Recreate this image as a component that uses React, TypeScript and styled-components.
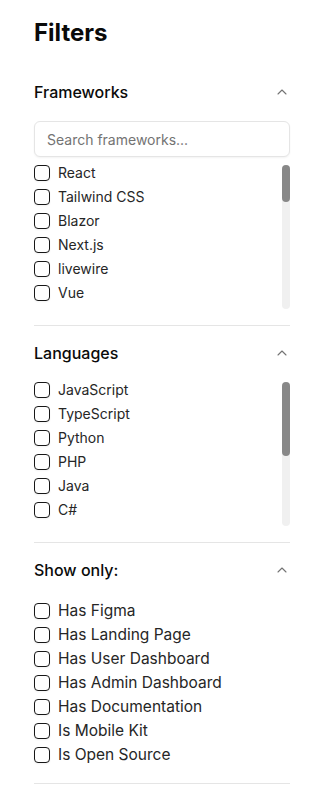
import React from "react";
import styled, { createGlobalStyle } from "styled-components";
import { ChevronUp } from "lucide-react";

const Global = createGlobalStyle`
  html, body { margin: 0; padding: 0; background: #ffffff; }
  body { font-family: Inter, "Noto Sans", sans-serif; color: #0a0a0a; }
  * { box-sizing: border-box; }
`;

const ROW = 16;
const GAP = 8;
const VIEW = 144;

const Sidebar = styled.aside`
  width: 319px;
  padding: 17px 29px 0 34px;
`;

const Title = styled.h2`
  margin: 0 0 16px;
  font-size: 24px;
  line-height: 32px;
  font-weight: 700;
  color: #0a0a0a;
`;

const Section = styled.section`
  border-bottom: 1px solid #e5e5e5;
`;

const Trigger = styled.button`
  display: flex;
  width: 100%;
  align-items: center;
  justify-content: space-between;
  padding: 17px 0 15px;
  border: 0;
  background: none;
  font-family: inherit;
  font-size: 16px;
  line-height: 20px;
  font-weight: 500;
  color: #0a0a0a;
  cursor: pointer;
  text-align: left;
`;

const Content = styled.div<{ $top: number; $bottom: number }>`
  padding: ${(p) => p.$top}px 0 ${(p) => p.$bottom}px;
`;

const Search = styled.input`
  display: block;
  width: 100%;
  height: 36px;
  margin-bottom: 8px;
  padding: 0 12px;
  border: 1px solid #e5e5e5;
  border-radius: 6px;
  box-shadow: 0 1px 2px rgba(0, 0, 0, 0.05);
  font-family: inherit;
  font-size: 14px;
  color: #0a0a0a;
  outline: none;
  &::placeholder { color: #737373; }
`;

const ScrollRoot = styled.div`
  position: relative;
  height: ${VIEW}px;
`;

const Viewport = styled.div`
  height: 100%;
  overflow: hidden;
`;

const Track = styled.div`
  position: absolute;
  top: 0;
  right: 0;
  bottom: 0;
  width: 8px;
  border-radius: 4px;
  background: #f0f0f0;
`;

const Thumb = styled.div`
  width: 8px;
  border-radius: 4px;
  background: #888888;
`;

const List = styled.div`
  display: flex;
  flex-direction: column;
  gap: ${GAP}px;
`;

const Row = styled.div`
  display: flex;
  align-items: center;
  gap: 8px;
  flex: 0 0 ${ROW}px;
  height: ${ROW}px;
  cursor: pointer;
`;

const Label = styled.span<{ $size: number }>`
  font-size: ${(p) => p.$size}px;
  line-height: ${ROW}px;
  color: #262626;
  white-space: nowrap;
`;

const Box = styled.span`
  display: block;
  flex: 0 0 16px;
  width: 16px;
  height: 16px;
  border: 1.3px solid #171717;
  border-radius: 4px;
  background: #fff;
  box-shadow: 0 1px 2px rgba(0, 0, 0, 0.05);
`;

const Chevron = styled(ChevronUp)`
  color: #737373;
  flex: 0 0 16px;
`;

const frameworks = [
  "React", "Tailwind CSS", "Blazor", "Next.js", "livewire", "Vue",
  "Angular", "Svelte", "Laravel", "Nuxt", "Remix", "Astro",
  "Django", "Rails", "Flutter", "SolidJS", "Qwik", "Gatsby",
  "Ember", "Alpine.js", "Bootstrap", "Express", "Spring", "Symfony",
];

const languages = [
  "JavaScript", "TypeScript", "Python", "PHP", "Java", "C#",
  "Ruby", "Go", "Rust", "Kotlin", "Swift", "Dart",
];

const showOnly = [
  "Has Figma", "Has Landing Page", "Has User Dashboard", "Has Admin Dashboard",
  "Has Documentation", "Is Mobile Kit", "Is Open Source",
];

function Options({ items, size = 14 }: { items: string[]; size?: number }) {
  return (
    <List>
      {items.map((i) => (
        <Row key={i} role="checkbox" aria-checked={false}>
          <Box />
          <Label $size={size}>{i}</Label>
        </Row>
      ))}
    </List>
  );
}

function ScrollList({ items }: { items: string[] }) {
  const contentHeight = items.length * (ROW + GAP) - GAP;
  const thumb = Math.round((VIEW * VIEW) / contentHeight);
  return (
    <ScrollRoot>
      <Viewport>
        <Options items={items} />
      </Viewport>
      <Track>
        <Thumb style={{ height: thumb }} />
      </Track>
    </ScrollRoot>
  );
}

function Header({ label }: { label: string }) {
  return (
    <Trigger type="button">
      {label}
      <Chevron size={16} strokeWidth={1.6} />
    </Trigger>
  );
}

export default function App() {
  return (
    <>
      <Global />
      <Sidebar>
        <Title>Filters</Title>
        <Section>
          <Header label="Frameworks" />
          <Content $top={4} $bottom={16}>
            <Search placeholder="Search frameworks..." />
            <ScrollList items={frameworks} />
          </Content>
        </Section>
        <Section>
          <Header label="Languages" />
          <Content $top={4} $bottom={16}>
            <ScrollList items={languages} />
          </Content>
        </Section>
        <Section>
          <Header label="Show only:" />
          <Content $top={8} $bottom={20}>
            <Options items={showOnly} size={15.5} />
          </Content>
        </Section>
      </Sidebar>
    </>
  );
}
